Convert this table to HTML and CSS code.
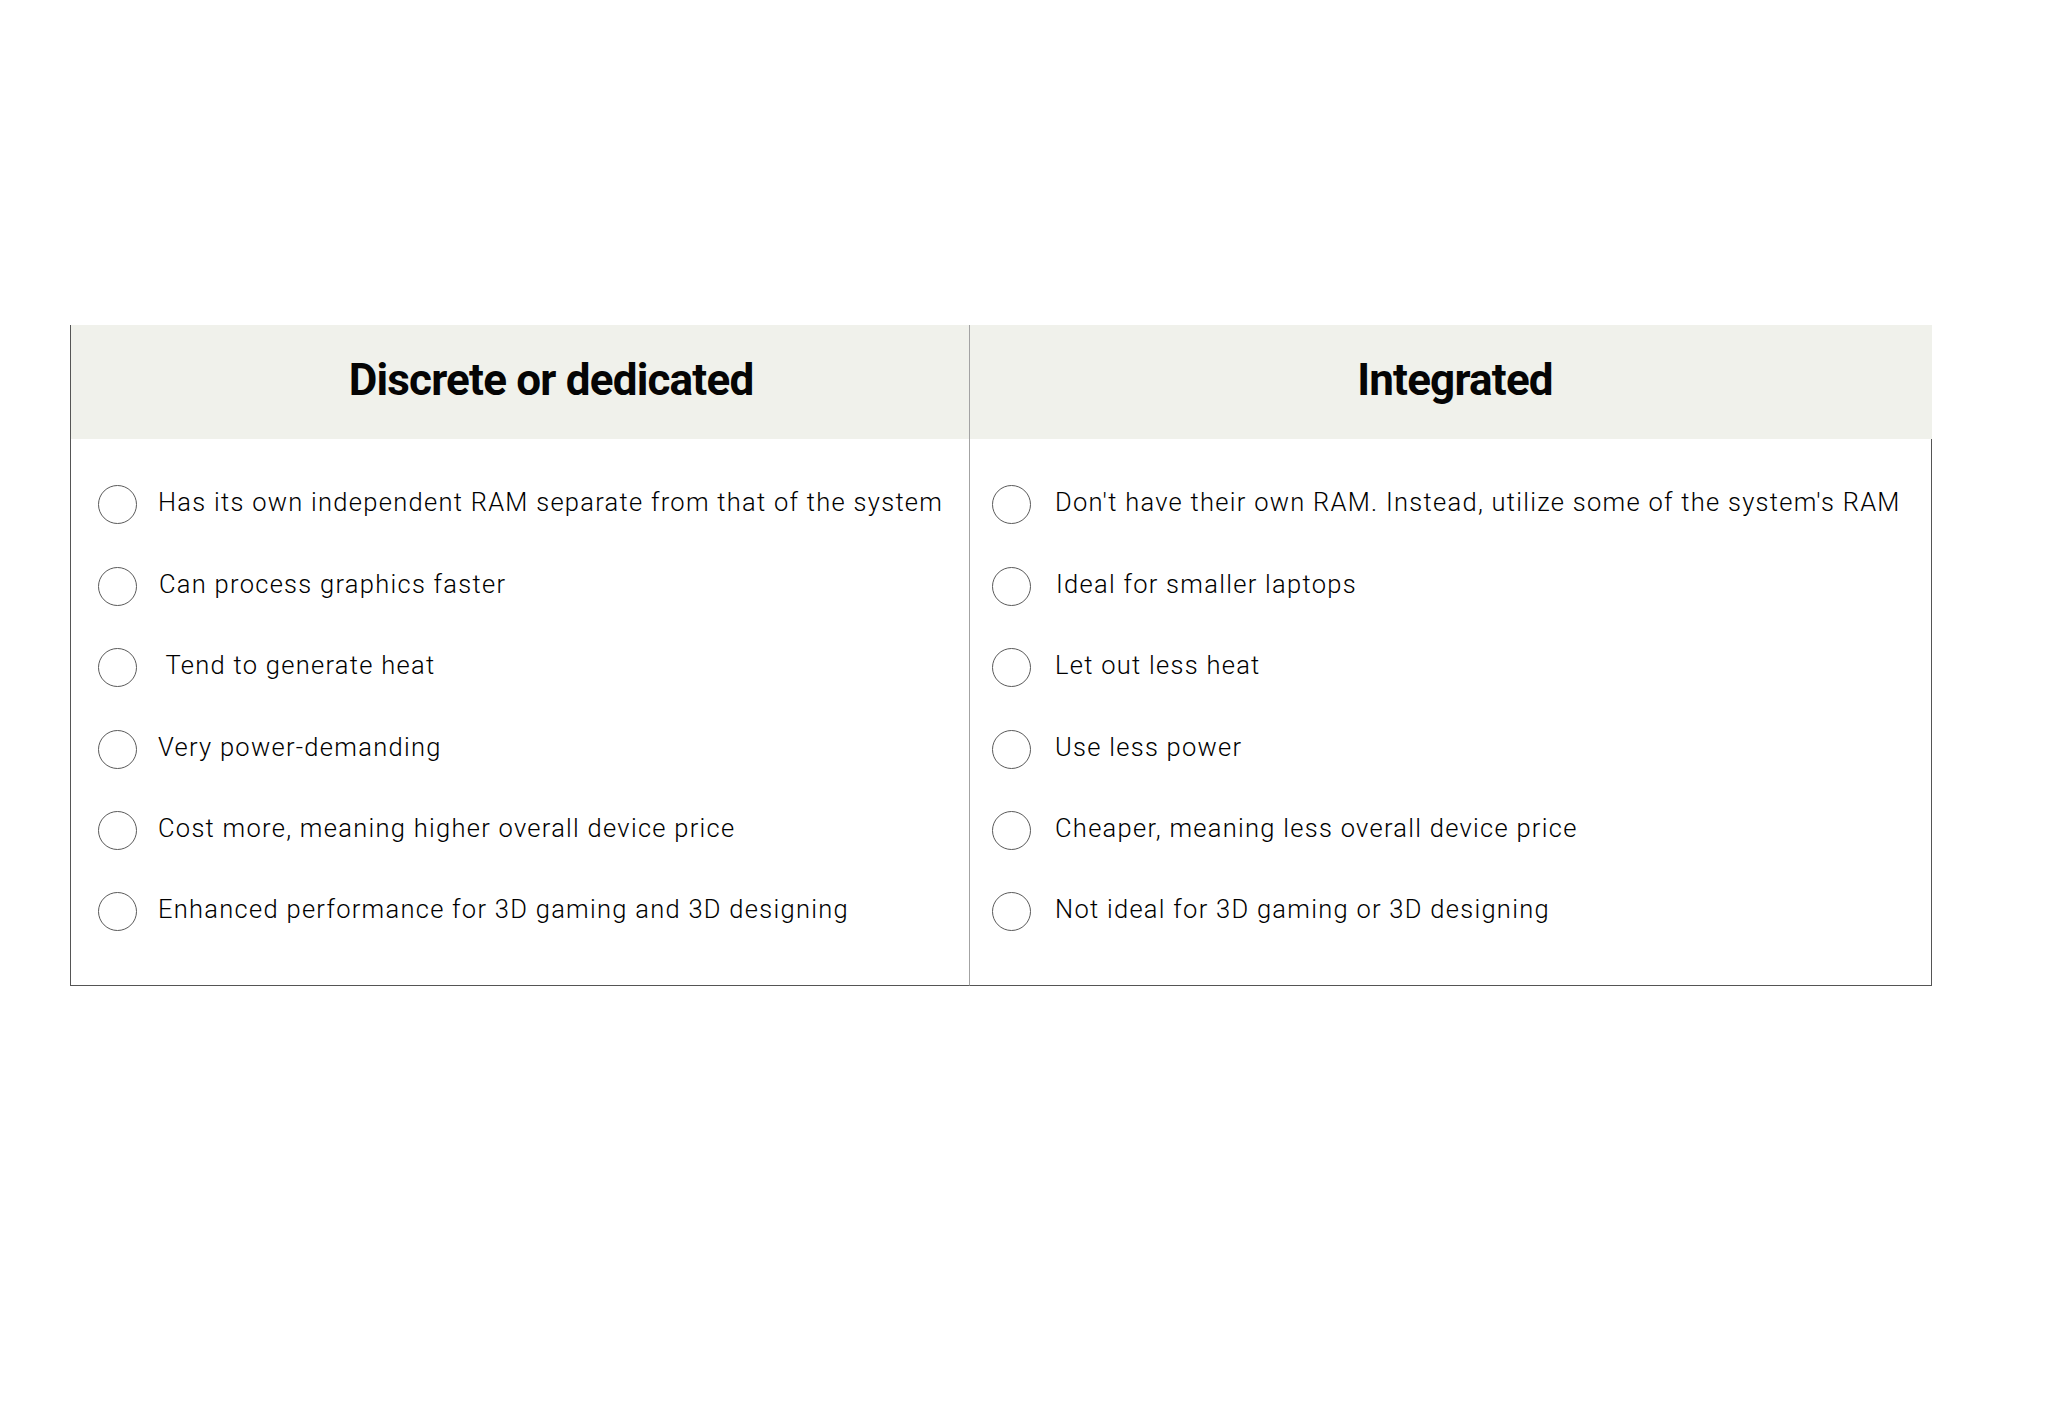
FILE: index.html
```html
<!DOCTYPE html>
<html lang="en">
<head>
<meta charset="utf-8">
<title>Discrete vs Integrated graphics</title>
<link rel="stylesheet" href="styles.css">
</head>
<body>
<div class="compare">
  <div class="th th-left"><h2 class="th-title">Discrete or dedicated</h2></div>
  <div class="th th-right"><h2 class="th-title">Integrated</h2></div>

  <ul class="td td-left">
    <li class="item"><span class="dot"></span><span class="label">Has its own independent RAM separate from that of the system</span></li>
    <li class="item"><span class="dot"></span><span class="label label-nudge">Can process graphics faster</span></li>
    <li class="item"><span class="dot"></span><span class="label">&nbsp;Tend to generate heat</span></li>
    <li class="item"><span class="dot"></span><span class="label">Very power-demanding</span></li>
    <li class="item"><span class="dot"></span><span class="label">Cost more, meaning higher overall device price</span></li>
    <li class="item"><span class="dot"></span><span class="label">Enhanced performance for 3D gaming and 3D designing</span></li>
  </ul>

  <ul class="td td-right">
    <li class="item"><span class="dot"></span><span class="label">Don't have their own RAM. Instead, utilize some of the system's RAM</span></li>
    <li class="item"><span class="dot"></span><span class="label label-nudge">Ideal for smaller laptops</span></li>
    <li class="item"><span class="dot"></span><span class="label">Let out less heat</span></li>
    <li class="item"><span class="dot"></span><span class="label">Use less power</span></li>
    <li class="item"><span class="dot"></span><span class="label">Cheaper, meaning less overall device price</span></li>
    <li class="item"><span class="dot"></span><span class="label">Not ideal for 3D gaming or 3D designing</span></li>
  </ul>
</div>
</body>
</html>
```
FILE: styles.css
```css
html, body {
  margin: 0;
  padding: 0;
  background: #ffffff;
}

body {
  font-family: Roboto, "Liberation Sans", sans-serif;
  color: #111111;
}

.compare {
  display: grid;
  grid-template-columns: 899px 963px;
  width: 1862px;
  margin: 325px 0 0 70px;
}

.th {
  height: 114px;
  box-sizing: border-box;
  background: #f0f1eb;
  display: flex;
  align-items: center;
  justify-content: center;
  padding-bottom: 5px;
}

.th-left {
  border-left: 1px solid #555555;
  padding-left: 62px;
}

.th-right {
  border-left: 1px solid #a3a3a3;
  padding-left: 8px;
}

.th-title {
  margin: 0;
  font-family: Roboto, "Liberation Sans", sans-serif;
  font-weight: 700;
  font-size: 44px;
  letter-spacing: -0.8px;
  line-height: normal;
  color: #050505;
  white-space: nowrap;
}

.td {
  list-style: none;
  margin: 0;
  box-sizing: border-box;
  padding: 25.3px 0 32px 0;
  border-bottom: 1px solid #555555;
}

.td-left {
  border-left: 1px solid #555555;
  padding-left: 27px;
}

.td-right {
  position: relative;
  border-left: 1px solid #a3a3a3;
  border-right: 1px solid #555555;
  padding-left: 22px;
}

.td-right::before {
  content: "";
  position: absolute;
  left: -1px;
  bottom: -13px;
  width: 1px;
  height: 12px;
  background: #a3a3a3;
}

.item {
  height: 81.4px;
  display: flex;
  align-items: center;
  gap: 21px;
}

.td-right .item {
  gap: 24px;
}

.dot {
  flex: none;
  width: 39px;
  height: 39px;
  box-sizing: border-box;
  border: 1.5px solid #5a5a5a;
  border-radius: 50%;
}

.label {
  font-family: Roboto, "Liberation Sans", sans-serif;
  font-weight: 300;
  font-size: 25.5px;
  letter-spacing: 1.28px;
  line-height: normal;
  color: #000000;
  white-space: nowrap;
  padding-bottom: 5px;
}

.label-nudge {
  margin-left: 1px;
}
```
